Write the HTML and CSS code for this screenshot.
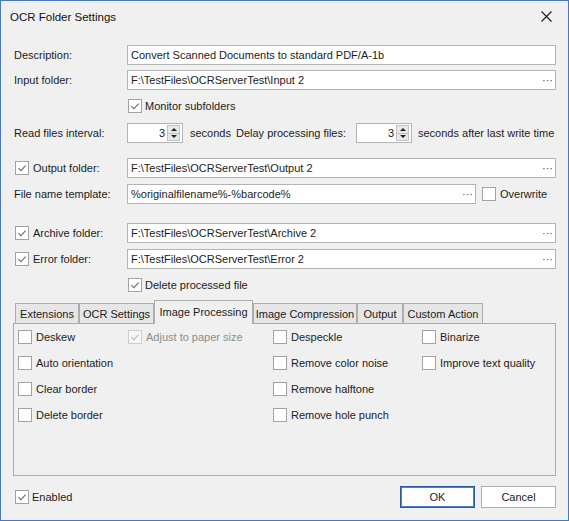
FILE: index.html
```html
<!DOCTYPE html>
<html>
<head>
<meta charset="utf-8">
<title>OCR Folder Settings</title>
<link rel="stylesheet" href="styles.css">
</head>
<body>
<div class="window">
  <div class="titlebar">
    <span class="title">OCR Folder Settings</span>
    <svg class="close" width="11" height="11" viewBox="0 0 11 11"><path d="M0.5 0.5L10.5 10.5M10.5 0.5L0.5 10.5" stroke="#1a1a1a" stroke-width="1.1" fill="none"/></svg>
  </div>
  <div class="content">
    <div class="row r-desc">
      <span class="lbl">Description:</span>
      <div class="field"><span class="val">Convert Scanned Documents to standard PDF/A-1b</span></div>
    </div>
    <div class="row r-gap5">
      <span class="lbl">Input folder:</span>
      <div class="field"><span class="val">F:\TestFiles\OCRServerTest\Input 2</span><span class="dots">···</span></div>
    </div>
    <div class="row r-gap6">
      <span class="lbl"></span>
      <span class="cb cb-field"><svg viewBox="0 0 12 12"><path d="M2.5 6.2L4.9 8.6L9.6 3.6" /></svg></span><span class="cb-text">Monitor subfolders</span>
    </div>
    <div class="row r-gap7">
      <span class="lbl">Read files interval:</span>
      <div class="spin">
        <span class="spin-val">3</span>
        <span class="spin-btns"><span class="sb"><span class="tri-up"></span></span><span class="sb"><span class="tri-down"></span></span></span>
      </div>
      <span class="unit">seconds</span>
      <span class="delay">Delay processing files:</span>
      <div class="spin">
        <span class="spin-val">3</span>
        <span class="spin-btns"><span class="sb"><span class="tri-up"></span></span><span class="sb"><span class="tri-down"></span></span></span>
      </div>
      <span class="unit2">seconds after last write time</span>
    </div>
    <div class="row r-gap15">
      <span class="lbl lbl-cb"><span class="cb"><svg viewBox="0 0 12 12"><path d="M2.5 6.2L4.9 8.6L9.6 3.6" /></svg></span><span class="cb-text">Output folder:</span></span>
      <div class="field"><span class="val">F:\TestFiles\OCRServerTest\Output 2</span><span class="dots">···</span></div>
    </div>
    <div class="row r-gap6">
      <span class="lbl">File name template:</span>
      <div class="field field-short"><span class="val">%originalfilename%-%barcode%</span><span class="dots">···</span></div>
      <span class="cb cb-over"></span><span class="cb-text">Overwrite</span>
    </div>
    <div class="row r-gap19">
      <span class="lbl lbl-cb"><span class="cb"><svg viewBox="0 0 12 12"><path d="M2.5 6.2L4.9 8.6L9.6 3.6" /></svg></span><span class="cb-text">Archive folder:</span></span>
      <div class="field"><span class="val">F:\TestFiles\OCRServerTest\Archive 2</span><span class="dots">···</span></div>
    </div>
    <div class="row r-gap6">
      <span class="lbl lbl-cb"><span class="cb"><svg viewBox="0 0 12 12"><path d="M2.5 6.2L4.9 8.6L9.6 3.6" /></svg></span><span class="cb-text">Error folder:</span></span>
      <div class="field"><span class="val">F:\TestFiles\OCRServerTest\Error 2</span><span class="dots">···</span></div>
    </div>
    <div class="row r-gap6">
      <span class="lbl"></span>
      <span class="cb cb-field"><svg viewBox="0 0 12 12"><path d="M2.5 6.2L4.9 8.6L9.6 3.6" /></svg></span><span class="cb-text">Delete processed file</span>
    </div>

    <div class="tabs">
      <span class="tab t-ext">Extensions</span>
      <span class="tab t-ocr">OCR Settings</span>
      <span class="tab tab-active t-ip">Image Processing</span>
      <span class="tab t-ic">Image Compression</span>
      <span class="tab t-out">Output</span>
      <span class="tab t-ca">Custom Action</span>
    </div>
    <div class="panel">
      <div class="opt"><span class="cb"></span><span class="cb-text">Deskew</span></div>
      <div class="opt disabled"><span class="cb"><svg viewBox="0 0 12 12"><path d="M2.5 6.2L4.9 8.6L9.6 3.6" /></svg></span><span class="cb-text">Adjust to paper size</span></div>
      <div class="opt"><span class="cb"></span><span class="cb-text">Despeckle</span></div>
      <div class="opt"><span class="cb"></span><span class="cb-text">Binarize</span></div>

      <div class="opt"><span class="cb"></span><span class="cb-text">Auto orientation</span></div>
      <div class="opt"></div>
      <div class="opt"><span class="cb"></span><span class="cb-text">Remove color noise</span></div>
      <div class="opt"><span class="cb"></span><span class="cb-text">Improve text quality</span></div>

      <div class="opt"><span class="cb"></span><span class="cb-text">Clear border</span></div>
      <div class="opt"></div>
      <div class="opt"><span class="cb"></span><span class="cb-text">Remove halftone</span></div>
      <div class="opt"></div>

      <div class="opt"><span class="cb"></span><span class="cb-text">Delete border</span></div>
      <div class="opt"></div>
      <div class="opt"><span class="cb"></span><span class="cb-text">Remove hole punch</span></div>
      <div class="opt"></div>
    </div>

    <div class="bottom">
      <span class="enabled"><span class="cb"><svg viewBox="0 0 12 12"><path d="M2.5 6.2L4.9 8.6L9.6 3.6" /></svg></span><span class="cb-text">Enabled</span></span>
      <span class="btn btn-ok">OK</span>
      <span class="btn btn-cancel">Cancel</span>
    </div>
  </div>
</div>
</body>
</html>
```

FILE: styles.css
```css
* { box-sizing: border-box; }
html, body { margin: 0; padding: 0; }
body {
  width: 569px;
  height: 521px;
  background: #f0f0f0;
  font-family: "Liberation Sans", Arial, sans-serif;
  font-size: 11px;
  color: #1c1c1c;
  overflow: hidden;
}
.window {
  width: 569px;
  height: 521px;
  border: 1px solid #4a78bd;
  background: #f0f0f0;
  display: flex;
  flex-direction: column;
}
.titlebar {
  height: 31px;
  flex: none;
  display: flex;
  align-items: center;
  justify-content: space-between;
  padding: 0 16px 0 9px;
}
.title { font-size: 11.5px; color: #111; }
.close { display: block; }

.content {
  padding: 0 12px;
  display: flex;
  flex-direction: column;
}
.row {
  display: flex;
  align-items: center;
  height: 20px;
  flex: none;
}
.r-desc { margin-top: 13px; }
.r-gap5 { margin-top: 5px; }
.r-gap6 { margin-top: 6px; }
.r-gap7 { margin-top: 7px; }
.r-gap15 { margin-top: 15px; }
.r-gap19 { margin-top: 19px; }

.lbl {
  width: 114px;
  flex: none;
  padding-left: 1px;
  white-space: nowrap;
}
.lbl-cb {
  display: flex;
  align-items: center;
  padding-left: 2px;
}
.field {
  flex: 1;
  height: 20px;
  background: #fff;
  border: 1px solid #b4b4b4;
  display: flex;
  align-items: center;
  padding: 0 2px 0 3px;
  min-width: 0;
}
.field-short { flex: none; width: 349px; }
.val { flex: 1; white-space: nowrap; overflow: hidden; }
.dots { color: #4a4a4a; font-size: 11px; line-height: 1; }

.cb {
  width: 14px;
  height: 14px;
  flex: none;
  background: #fff;
  border: 1px solid #a2a2a2;
  display: flex;
  align-items: center;
  justify-content: center;
}
.cb svg { width: 12px; height: 12px; display: block; }
.cb svg path { fill: none; stroke: #6e6e6e; stroke-width: 1.1; }
.cb-text { margin-left: 4px; white-space: nowrap; }
.cb-field { margin-left: 1px; }
.cb-field + .cb-text { margin-left: 3px; }
.cb-over { margin-left: 6px; }

.spin {
  width: 56px;
  height: 20px;
  flex: none;
  background: #fff;
  border: 1px solid #b4b4b4;
  display: flex;
  align-items: stretch;
}
.spin-val {
  flex: 1;
  text-align: right;
  padding-right: 2px;
  display: flex;
  align-items: center;
  justify-content: flex-end;
}
.spin-btns {
  width: 13px;
  display: flex;
  flex-direction: column;
  margin: 1px 2px 1px 0;
}
.sb {
  flex: 1;
  background: #e8e8e8;
  border: 1px solid #c2c2c2;
  display: flex;
  align-items: center;
  justify-content: center;
}
.sb + .sb { border-top: none; }
.tri-up {
  width: 0; height: 0;
  border-left: 3px solid transparent;
  border-right: 3px solid transparent;
  border-bottom: 3px solid #222;
}
.tri-down {
  width: 0; height: 0;
  border-left: 3px solid transparent;
  border-right: 3px solid transparent;
  border-top: 3px solid #222;
}
.unit { width: 46px; margin-left: 7px; flex: none; white-space: nowrap; }
.delay { width: 120px; flex: none; white-space: nowrap; }
.unit2 { margin-left: 6px; white-space: nowrap; }

.tabs {
  margin-top: 5px;
  height: 23px;
  flex: none;
  display: flex;
  align-items: flex-end;
  padding-left: 2px;
}
.tab {
  height: 20px;
  flex: none;
  padding: 0;
  background: #e6e6e6;
  border: 1px solid #adadad;
  border-bottom: none;
  display: flex;
  align-items: center;
  justify-content: center;
  white-space: nowrap;
}
.t-ext { width: 64px; }
.t-ocr { width: 75px; }
.t-ip { width: 99px; }
.t-ic { width: 104px; }
.t-out { width: 46px; }
.t-ca { width: 80px; }
.tab-active {
  height: 24px;
  margin-bottom: -1px;
  background: #f0f0f0;
  position: relative;
  z-index: 1;
  padding-bottom: 1px;
}
.panel {
  height: 153px;
  flex: none;
  border: 1px solid #adadad;
  background: #f0f0f0;
  display: grid;
  grid-template-columns: 110px 145px 149px 1fr;
  grid-auto-rows: 26px;
  align-content: start;
  padding-left: 4px;
}
.opt { display: flex; align-items: center; }
.disabled .cb { border-color: #cfcfcf; background: #f6f6f6; }
.disabled .cb svg path { stroke: #bdbdbd; }
.disabled .cb-text { color: #8c8c8c; }

.bottom {
  margin-top: 10px;
  height: 22px;
  display: flex;
  align-items: center;
}
.enabled {
  display: flex;
  align-items: center;
  padding-left: 2px;
  margin-right: auto;
}
.enabled .cb-text { margin-left: 3px; }
.btn {
  width: 75px;
  height: 22px;
  background: #fff;
  display: flex;
  align-items: center;
  justify-content: center;
}
.btn-ok {
  border: 1px solid #2b5c9f;
  box-shadow: inset 0 0 0 1px #4f80c6;
}
.btn-cancel {
  margin-left: 6px;
  border: 1px solid #adadad;
}
```
